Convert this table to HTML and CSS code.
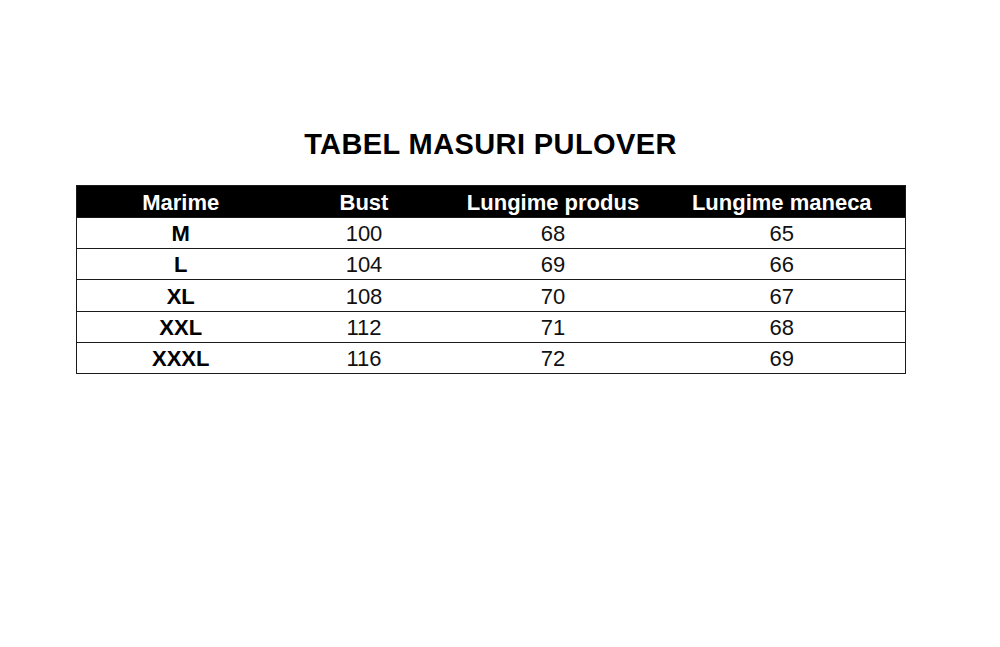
FILE: index.html
```html
<!DOCTYPE html>
<html lang="ro">
<head>
<meta charset="utf-8">
<title>Tabel masuri pulover</title>
<link rel="stylesheet" href="styles.css">
</head>
<body>
<div class="page">
  <h1 class="title">TABEL MASURI PULOVER</h1>
  <table class="sizes">
    <colgroup>
      <col class="c-size">
      <col class="c-bust">
      <col class="c-len">
      <col class="c-sleeve">
    </colgroup>
    <thead>
      <tr class="head-row">
        <th>Marime</th>
        <th>Bust</th>
        <th>Lungime produs</th>
        <th>Lungime maneca</th>
      </tr>
    </thead>
    <tbody>
      <tr><td class="size">M</td><td>100</td><td>68</td><td>65</td></tr>
      <tr><td class="size">L</td><td>104</td><td>69</td><td>66</td></tr>
      <tr class="tall"><td class="size">XL</td><td>108</td><td>70</td><td>67</td></tr>
      <tr><td class="size">XXL</td><td>112</td><td>71</td><td>68</td></tr>
      <tr><td class="size">XXXL</td><td>116</td><td>72</td><td>69</td></tr>
    </tbody>
  </table>
</div>
</body>
</html>
```
FILE: styles.css
```css
html, body {
  margin: 0;
  padding: 0;
  background: #ffffff;
}

body {
  font-family: "Liberation Sans", Arial, sans-serif;
  color: #000;
}

.page {
  width: 829px;
  margin-left: 76px;
  padding-top: 128px;
}

.title {
  margin: 0 0 25px 0;
  font-size: 29px;
  line-height: 32px;
  font-weight: 700;
  letter-spacing: 0.4px;
  text-align: center;
  height: 32px;
}

.sizes {
  width: 829px;
  border-collapse: collapse;
  table-layout: fixed;
  border: 1px solid #1a1a1a;
}

.c-size { width: 208px; }
.c-bust { width: 159px; }
.c-len { width: 219px; }
.c-sleeve { width: 243px; }

.head-row th {
  background: #000;
  color: #fff;
  font-size: 22px;
  font-weight: 700;
  line-height: 24px;
  height: 24px;
  padding: 5px 0 2px 0;
  text-align: center;
}

.head-row th:last-child {
  padding-right: 4px;
}

.sizes td {
  font-size: 22px;
  line-height: 28px;
  height: 28px;
  padding: 2px 0 0 0;
  text-align: center;
  border-top: 1px solid #1a1a1a;
  color: #111;
}

.sizes tr.tall td {
  height: 29px;
}

.sizes td:last-child {
  padding-right: 4px;
}

.sizes td.size {
  font-size: 22px;
  font-weight: 700;
  color: #000;
}
```
